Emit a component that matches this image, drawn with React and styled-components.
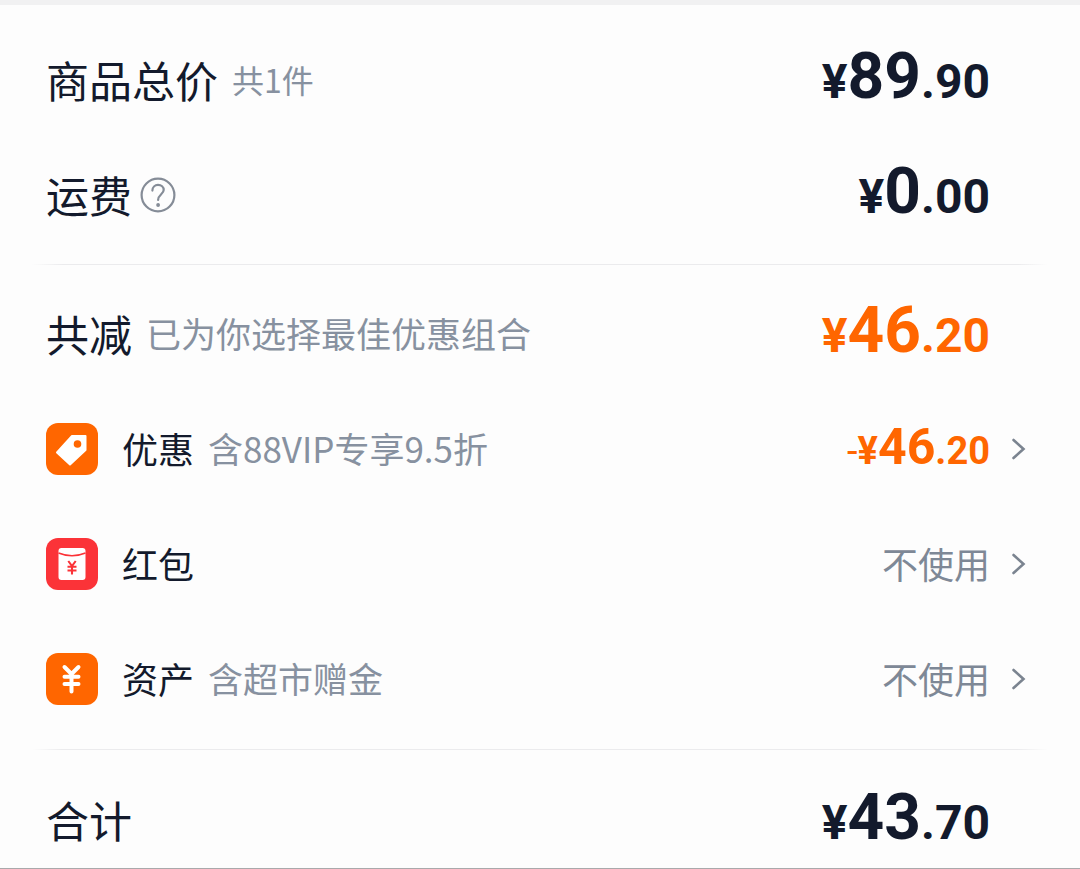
import React from "react";
import styled, { createGlobalStyle } from "styled-components";

const GlobalStyle = createGlobalStyle`
  *, *::before, *::after { box-sizing: border-box; }
  body {
    margin: 0;
    background: #fdfdfd;
    color: #131a2c;
    font-family: "Noto Sans CJK SC", sans-serif;
  }
  button {
    border: 0;
    padding: 0;
    background: none;
    color: inherit;
    font: inherit;
    cursor: pointer;
  }
`;

const Sheet = styled.main`
  border-top: 5px solid #f1f1f2;
  border-bottom: 1px solid #a9a9ab;
`;

const Section = styled.section`
  padding: ${(p) => p.$top}px 90px ${(p) => p.$bottom}px 46px;
`;

const Divider = styled.hr`
  height: 1px;
  margin: 0 32px;
  border: 0;
  background: linear-gradient(to right, transparent, #ebebed 3%, #ebebed 97%, transparent);
`;

const Row = styled.div`
  display: flex;
  align-items: center;
  justify-content: space-between;
  height: ${(p) => (p.$short ? 92 : 115)}px;
`;

const Group = styled.div`
  display: flex;
  align-items: center;
`;

const Label = styled.span`
  margin-left: ${(p) => (p.$item ? 24 : 0)}px;
  padding-bottom: 2px;
  font-size: ${(p) => (p.$item ? 36 : 43)}px;
  font-weight: 400;
  line-height: 60px;
`;

const Note = styled.span`
  margin-left: 14px;
  padding-bottom: 2px;
  color: #8791a0;
  font-size: ${(p) => (p.$count ? 32 : 35)}px;
  line-height: 60px;
`;

const HelpButton = styled.button`
  display: flex;
  margin-left: 8px;
`;

const Badge = styled.svg`
  width: 52px;
  height: 52px;
  border-radius: 12px;
  background: ${(p) => p.$color};
`;

const Amount = styled.span`
  display: flex;
  align-items: baseline;
  color: ${(p) => (p.$accent ? "#ff6600" : "inherit")};
  font-family: Roboto, sans-serif;
  font-size: ${(p) => (p.$small ? 38 : 48)}px;
  font-weight: 700;
  line-height: 80px;
`;

const Whole = styled.span`
  font-size: ${(p) => (p.$small ? 50 : 64)}px;
`;

const Minus = styled.span`
  font-weight: 400;
`;

const Choice = styled.button`
  display: flex;
  align-items: center;
  margin-right: -36px;
`;

const Unused = styled.span`
  padding-bottom: 2px;
  color: #7e8896;
  font-size: 36px;
  line-height: 60px;
`;

const Arrow = styled.svg`
  width: 14px;
  height: 24px;
  margin-left: 22px;
`;

function Price({ value, accent, small, minus }) {
  const [whole, cents] = value.split(".");
  return (
    <Amount $accent={accent} $small={small}>
      {minus && <Minus>-</Minus>}¥<Whole $small={small}>{whole}</Whole>.{cents}
    </Amount>
  );
}

function Chevron() {
  return (
    <Arrow viewBox="0 0 14 24" fill="none" stroke="#7b8490" strokeWidth="2.6" aria-hidden="true">
      <path d="M1.5 3 L11.5 12 L1.5 21" strokeLinecap="round" />
    </Arrow>
  );
}

function TagBadge() {
  return (
    <Badge $color="#ff6600" viewBox="0 0 52 52" aria-hidden="true">
      <path
        fill="#fff"
        stroke="#fff"
        strokeWidth="2"
        strokeLinejoin="round"
        d="M26 13 H39.5 V27 L24 41.5 L11 29.5 Z"
      />
      <circle cx="31.5" cy="21" r="3.8" fill="#ff6600" />
    </Badge>
  );
}

function PacketBadge() {
  return (
    <Badge $color="#fb3338" viewBox="0 0 52 52" aria-hidden="true">
      <rect x="12.5" y="10" width="27" height="32" rx="3" fill="#fff" />
      <path d="M12.5 15 Q26 20.5 39.5 15" fill="none" stroke="#fb3338" strokeWidth="1.6" />
      <path
        d="M22.3 23 L26 28 L29.7 23 M26 28 V36.5 M21.5 28.7 H30.5 M21.5 32.5 H30.5"
        fill="none"
        stroke="#fb3338"
        strokeWidth="2.1"
      />
    </Badge>
  );
}

function YuanBadge() {
  return (
    <Badge $color="#ff6600" viewBox="0 0 52 52" aria-hidden="true">
      <path
        d="M18.5 14 L25.5 21 L32.5 14 M25.5 21 V38.5 M18.5 23.8 H32.5 M18.5 31 H32.5"
        fill="none"
        stroke="#fff"
        strokeWidth="4"
        strokeLinecap="round"
        strokeLinejoin="round"
      />
    </Badge>
  );
}

function HelpIcon() {
  return (
    <svg width="36" height="36" viewBox="0 0 36 36" fill="none" stroke="#858c97" aria-hidden="true">
      <circle cx="18" cy="18" r="16.4" strokeWidth="2.2" />
      <path
        d="M12.4 13.6 C12.4 10.2 15 7.9 18 7.9 C21.3 7.9 23.7 10 23.7 13 C23.7 17 18.1 17.8 18.1 23"
        strokeWidth="2.2"
        strokeLinecap="round"
      />
      <circle cx="18.1" cy="28" r="1.9" fill="#858c97" stroke="none" />
    </svg>
  );
}

function Item({ badge, label, note, children }) {
  return (
    <Row>
      <Group>
        {badge}
        <Label $item>{label}</Label>
        {note && <Note>{note}</Note>}
      </Group>
      <Choice type="button" aria-label={label}>
        {children}
        <Chevron />
      </Choice>
    </Row>
  );
}

export default function App() {
  return (
    <>
      <GlobalStyle />
      <Sheet>
        <Section $top={17} $bottom={12}>
          <Row>
            <Group>
              <Label>商品总价</Label>
              <Note $count>共1件</Note>
            </Group>
            <Price value="89.90" />
          </Row>
          <Row>
            <Group>
              <Label>运费</Label>
              <HelpButton type="button" aria-label="运费">
                <HelpIcon />
              </HelpButton>
            </Group>
            <Price value="0.00" />
          </Row>
        </Section>
        <Divider />
        <Section $top={11} $bottom={13}>
          <Row>
            <Group>
              <Label>共减</Label>
              <Note>已为你选择最佳优惠组合</Note>
            </Group>
            <Price value="46.20" accent />
          </Row>
          <Item badge={<TagBadge />} label="优惠" note="含88VIP专享9.5折">
            <Price value="46.20" accent small minus />
          </Item>
          <Item badge={<PacketBadge />} label="红包">
            <Unused>不使用</Unused>
          </Item>
          <Item badge={<YuanBadge />} label="资产" note="含超市赠金">
            <Unused>不使用</Unused>
          </Item>
        </Section>
        <Divider />
        <Section $top={24} $bottom={2}>
          <Row $short>
            <Label>合计</Label>
            <Price value="43.70" />
          </Row>
        </Section>
      </Sheet>
    </>
  );
}
